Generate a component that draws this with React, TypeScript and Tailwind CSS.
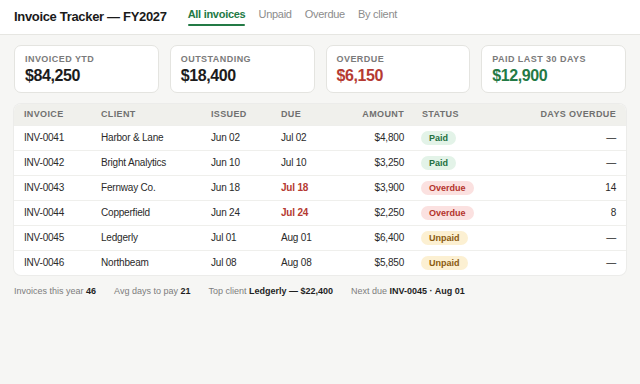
import React from 'react';

type Status = 'Paid' | 'Overdue' | 'Unpaid';

interface Invoice {
  id: string;
  client: string;
  issued: string;
  due: string;
  amount: string;
  status: Status;
  daysOverdue: string;
}

const invoices: Invoice[] = [
  { id: 'INV-0041', client: 'Harbor & Lane', issued: 'Jun 02', due: 'Jul 02', amount: '$4,800', status: 'Paid', daysOverdue: '—' },
  { id: 'INV-0042', client: 'Bright Analytics', issued: 'Jun 10', due: 'Jul 10', amount: '$3,250', status: 'Paid', daysOverdue: '—' },
  { id: 'INV-0043', client: 'Fernway Co.', issued: 'Jun 18', due: 'Jul 18', amount: '$3,900', status: 'Overdue', daysOverdue: '14' },
  { id: 'INV-0044', client: 'Copperfield', issued: 'Jun 24', due: 'Jul 24', amount: '$2,250', status: 'Overdue', daysOverdue: '8' },
  { id: 'INV-0045', client: 'Ledgerly', issued: 'Jul 01', due: 'Aug 01', amount: '$6,400', status: 'Unpaid', daysOverdue: '—' },
  { id: 'INV-0046', client: 'Northbeam', issued: 'Jul 08', due: 'Aug 08', amount: '$5,850', status: 'Unpaid', daysOverdue: '—' },
];

const statusStyles: Record<Status, string> = {
  Paid: 'bg-[#e3f3e8] text-[#23703f]',
  Overdue: 'bg-[#fbe1e0] text-[#b3332c]',
  Unpaid: 'bg-[#fcf0d2] text-[#8a5a10]',
};

const stats = [
  { label: 'Invoiced YTD', value: '$84,250', color: 'text-[#1c1c1c]' },
  { label: 'Outstanding', value: '$18,400', color: 'text-[#1c1c1c]' },
  { label: 'Overdue', value: '$6,150', color: 'text-[#b53a32]' },
  { label: 'Paid last 30 days', value: '$12,900', color: 'text-[#237a45]' },
];

const tabs = ['All invoices', 'Unpaid', 'Overdue', 'By client'];

export default function App() {
  return (
    <div className="w-[640px] h-[384px] bg-[#f6f6f4] font-['Liberation_Sans',Arial,sans-serif] text-[#1f1f1f] overflow-hidden">
      {/* Header */}
      <div className="h-[35px] bg-white border-b border-[#e6e6e2] flex items-start px-[14px]">
        <h1 className="text-[13px] tracking-[-0.025em] font-bold mt-[8px] leading-[18px] text-[#1a1a1a]">Invoice Tracker — FY2027</h1>
        <nav className="flex gap-[13px] ml-[21px] mt-[7px]">
          {tabs.map((t, i) => (
            <div key={t} className="flex flex-col items-stretch">
              <span className={`text-[11px] tracking-[-0.025em] leading-[14px] ${i === 0 ? 'font-bold text-[#237a45]' : 'text-[#8c8c8c]'}`}>{t}</span>
              {i === 0 && <span className="mt-[3px] h-[2px] bg-[#237a45] rounded-full" />}
            </div>
          ))}
        </nav>
      </div>

      {/* Stat cards */}
      <div className="grid grid-cols-4 gap-[11px] px-[14px] mt-[10px]">
        {stats.map((s) => (
          <div key={s.label} className="bg-white border border-[#e4e4e0] rounded-[7px] h-[48px] px-[10px] pt-[8px]">
            <div className="text-[9px] leading-[11px] font-bold uppercase tracking-[0.05em] text-[#7a7a7a]">{s.label}</div>
            <div className={`text-[16px] tracking-[-0.025em] leading-[20px] font-bold mt-[1px] ${s.color}`}>{s.value}</div>
          </div>
        ))}
      </div>

      {/* Table */}
      <div className="mx-[14px] mt-[11px] bg-white rounded-[7px] overflow-hidden shadow-[0_0_0_1px_#ececea]">
        <table className="w-full border-collapse text-[10px] tracking-[-0.02em]">
          <thead>
            <tr className="bg-[#f0f0ec] h-[21px] text-[9px] font-bold uppercase tracking-[0.04em] text-[#707070]">
              <th className="text-left pl-[10px] w-[87px] font-bold">Invoice</th>
              <th className="text-left w-[110px] font-bold">Client</th>
              <th className="text-left w-[70px] font-bold">Issued</th>
              <th className="text-left w-[60px] font-bold">Due</th>
              <th className="text-right w-[63px] font-bold">Amount</th>
              <th className="text-left pl-[18px] font-bold">Status</th>
              <th className="text-right pr-[10px] font-bold">Days overdue</th>
            </tr>
          </thead>
          <tbody>
            {invoices.map((inv) => (
              <tr key={inv.id} className="h-[25px] border-t border-[#efefec] text-[#2a2a2a]">
                <td className="pl-[10px]">{inv.id}</td>
                <td>{inv.client}</td>
                <td>{inv.issued}</td>
                <td className={inv.status === 'Overdue' ? 'font-bold text-[#b53a32]' : ''}>{inv.due}</td>
                <td className="text-right">{inv.amount}</td>
                <td className="pl-[17px]">
                  <span className={`inline-block text-[9px] tracking-normal font-bold leading-[14px] px-[8px] rounded-full ${statusStyles[inv.status]}`}>{inv.status}</span>
                </td>
                <td className="text-right pr-[10px]">{inv.daysOverdue}</td>
              </tr>
            ))}
          </tbody>
        </table>
      </div>

      {/* Footer summary */}
      <div className="flex gap-[18px] px-[14px] mt-[10px] text-[9px] text-[#7d7d7d]">
        <span>Invoices this year <b className="text-[#1f1f1f]">46</b></span>
        <span>Avg days to pay <b className="text-[#1f1f1f]">21</b></span>
        <span>Top client <b className="text-[#1f1f1f]">Ledgerly — $22,400</b></span>
        <span>Next due <b className="text-[#1f1f1f]">INV-0045 · Aug 01</b></span>
      </div>
    </div>
  );
}
